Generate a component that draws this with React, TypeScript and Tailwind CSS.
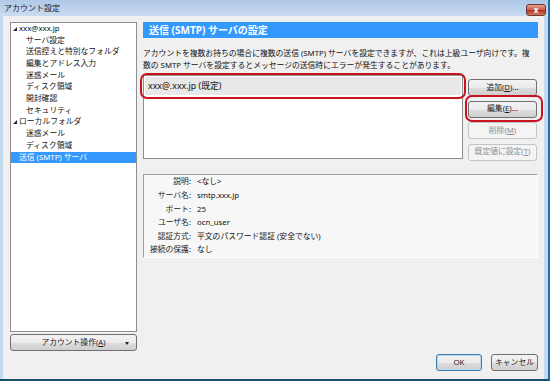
import type { ReactNode } from 'react';

type TreeItem = { label: string; level: 0 | 1; expander?: boolean; selected?: boolean };

const TREE: TreeItem[] = [
  { label: 'xxx@xxx.jp', level: 0, expander: true },
  { label: 'サーバ設定', level: 1 },
  { label: '送信控えと特別なフォルダ', level: 1 },
  { label: '編集とアドレス入力', level: 1 },
  { label: '迷惑メール', level: 1 },
  { label: 'ディスク領域', level: 1 },
  { label: '開封確認', level: 1 },
  { label: 'セキュリティ', level: 1 },
  { label: 'ローカルフォルダ', level: 0, expander: true },
  { label: '迷惑メール', level: 1 },
  { label: 'ディスク領域', level: 1 },
  { label: '送信 (SMTP) サーバ', level: 0, selected: true },
];

const DETAILS: [string, string][] = [
  ['説明:', '<なし>'],
  ['サーバ名:', 'smtp.xxx.jp'],
  ['ポート:', '25'],
  ['ユーザ名:', 'ocn_user'],
  ['認証方式:', '平文のパスワード認証 (安全でない)'],
  ['接続の保護:', 'なし'],
];

function Expander() {
  return (
    <svg width="4" height="4" viewBox="0 0 4 4" className="shrink-0">
      <path d="M4 0 L4 4 L0 4 Z" fill="#262626" />
    </svg>
  );
}

function Btn({ children, disabled, isDefault, className = '' }: { children: ReactNode; disabled?: boolean; isDefault?: boolean; className?: string }) {
  const base = 'flex items-center justify-center h-[17px] rounded-[3px] border text-[7.8px] leading-none';
  if (disabled) {
    return <div className={`${base} border-[#c2c5c8] bg-[#f4f4f4] text-[#8d8d8d] ${className}`}>{children}</div>;
  }
  return (
    <div
      className={`${base} ${isDefault ? 'border-[#3c7fb1] shadow-[inset_0_0_0_1px_#b6d8f2]' : 'border-[#707070]'} bg-[linear-gradient(#f3f3f3_0%,#ebebeb_50%,#dddddd_51%,#cfcfcf_100%)] text-[#1a1a1a] ${className}`}
    >
      {children}
    </div>
  );
}

export default function App() {
  return (
    <div className="w-[550px] h-[381px] flex flex-col bg-[#c4d8ee] border-r-2 border-b-2 border-r-[#1f6fa8] border-b-[#1b4f6e] font-['Noto_Sans','Noto_Sans_CJK_JP',sans-serif] text-[#111] overflow-hidden">
      {/* title bar */}
      <div className="h-[16px] flex items-center pl-[4px] pr-[2px] bg-[linear-gradient(#aec8e6,#c9dcf1)] shrink-0">
        <span className="text-[8px] text-[#1c1c1c] leading-none">アカウント設定</span>
        <div className="ml-auto mt-[4px] w-[20px] h-[12px] rounded-[3px] border border-[#6d3a38] bg-[linear-gradient(#e8a493,#c9553f_50%,#b6321c_51%,#d07860)] flex items-center justify-center">
          <span className="text-white text-[8px] font-bold leading-none">x</span>
        </div>
      </div>

      {/* client area */}
      <div className="flex-1 flex flex-col bg-[#f0f0f0] ml-[3px] mr-[4px] pt-[6px] pl-[7px]">
        <div className="flex">
          {/* left column */}
          <div className="w-[127px] flex flex-col">
            <div className="h-[310px] bg-white border border-[#8e8f8f]">
              {TREE.map((t, i) => (
                <div
                  key={i}
                  className={`h-[11.7px] flex items-center text-[7.8px] leading-none whitespace-nowrap ${t.selected ? 'bg-[#3399ff] text-white' : ''}`}
                >
                  {t.level === 0 ? (
                    <div className="w-[8px] pl-[2px] flex items-center">{t.expander && <Expander />}</div>
                  ) : (
                    <div className="w-[15px]" />
                  )}
                  <span>{t.label}</span>
                </div>
              ))}
            </div>
            <Btn className="mt-[2px] relative">
              <span>
                アカウント操作(<u>A</u>)
              </span>
              <svg width="4" height="3" viewBox="0 0 4 3" className="absolute right-[7px] top-[7px]">
                <path d="M0 0 L4 0 L2 3 Z" fill="#222" />
              </svg>
            </Btn>
          </div>

          {/* right column */}
          <div className="w-[395px] ml-[6px] flex flex-col">
            <div className="h-[16px] bg-[#3399ff] flex items-center pl-[6px]">
              <span className="text-white text-[10px] font-bold leading-none">送信 (SMTP) サーバの設定</span>
            </div>
            <div className="mt-[10px] text-[7.8px] leading-[11.5px] whitespace-nowrap">
              <div>アカウントを複数お持ちの場合に複数の送信 (SMTP) サーバを設定できますが、これは上級ユーザ向けです。複</div>
              <div>数の SMTP サーバを設定するとメッセージの送信時にエラーが発生することがあります。</div>
            </div>

            <div className="relative flex mt-[4px]">
              <div className="w-[320px] h-[84px] bg-white border border-[#8e8f8f] p-[1px]">
                <div className="h-[18px] bg-[#e8e8e8] flex items-center pl-[3px] text-[8.8px] leading-none">xxx@.xxx.jp (既定)</div>
              </div>
              <div className="ml-[5px] w-[69px] mt-[4px] flex flex-col gap-[4.5px]">
                <Btn>
                  追加(<u>D</u>)...
                </Btn>
                <Btn>
                  編集(<u>E</u>)...
                </Btn>
                <Btn disabled>
                  削除(<u>M</u>)
                </Btn>
                <Btn disabled>
                  既定値に設定(<u>T</u>)
                </Btn>
              </div>
              {/* annotation marks */}
              <div className="absolute left-[-3px] top-[-2px] w-[326px] h-[26px] rounded-[7px] border-2 border-[#c8141e]" />
              <div className="absolute left-[322px] top-[20px] w-[78px] h-[27px] rounded-[7px] border-2 border-[#c8141e]" />
            </div>

            <div className="mt-[13px] h-[84px] bg-[#f7f7f7] border border-t-[#a0a0a0] border-l-[#a0a0a0] border-r-[#ffffff] border-b-[#ffffff] pt-[1px]">
              {DETAILS.map(([k, v]) => (
                <div key={k} className="h-[13.6px] flex items-center text-[7.8px] leading-none whitespace-nowrap">
                  <div className="w-[47px] text-right text-[#222]">{k}</div>
                  <div className="ml-[6px]">{v}</div>
                </div>
              ))}
            </div>
          </div>
        </div>

        {/* bottom buttons */}
        <div className="flex justify-end gap-[9px] mt-[3px] pr-[6px]">
          <Btn isDefault className="w-[46px]">
            OK
          </Btn>
          <Btn className="w-[47px]">キャンセル</Btn>
        </div>
      </div>
    </div>
  );
}
